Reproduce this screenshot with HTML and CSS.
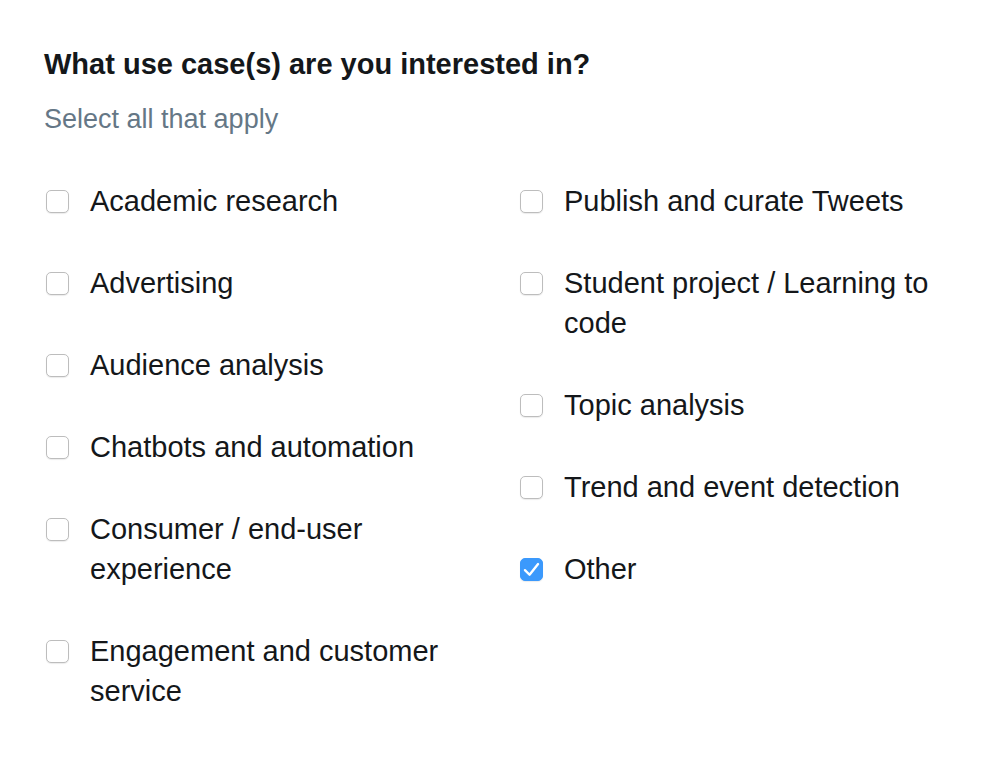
FILE: index.html
```html
<!DOCTYPE html>
<html>
<head>
<meta charset="utf-8">
<link rel="stylesheet" href="styles.css">
</head>
<body>
<div class="form">
  <h2 class="title">What use case(s) are you interested in?</h2>
  <p class="hint">Select all that apply</p>
  <div class="options">
    <div class="col">
      <label class="opt"><span class="box"></span><span class="txt">Academic research</span></label>
      <label class="opt"><span class="box"></span><span class="txt">Advertising</span></label>
      <label class="opt"><span class="box"></span><span class="txt">Audience analysis</span></label>
      <label class="opt"><span class="box"></span><span class="txt">Chatbots and automation</span></label>
      <label class="opt"><span class="box"></span><span class="txt">Consumer / end-user experience</span></label>
      <label class="opt"><span class="box"></span><span class="txt">Engagement and customer service</span></label>
    </div>
    <div class="col">
      <label class="opt"><span class="box"></span><span class="txt">Publish and curate Tweets</span></label>
      <label class="opt"><span class="box"></span><span class="txt">Student project / Learning to code</span></label>
      <label class="opt"><span class="box"></span><span class="txt">Topic analysis</span></label>
      <label class="opt"><span class="box"></span><span class="txt">Trend and event detection</span></label>
      <label class="opt"><span class="box checked"><svg viewBox="0 0 24 24" width="21" height="21"><path d="M4.5 12.8 L9.8 18 L19.5 5.8" fill="none" stroke="#fff" stroke-width="2.7" stroke-linecap="round" stroke-linejoin="round"/></svg></span><span class="txt">Other</span></label>
    </div>
  </div>
</div>
</body>
</html>
```

FILE: styles.css
```css
html, body {
  margin: 0;
  padding: 0;
  background: #ffffff;
}
body {
  font-family: "Liberation Sans", Arial, sans-serif;
  color: #14171a;
}
.form {
  padding: 47px 0 0 44px;
}
.title {
  margin: 0;
  font-size: 29px;
  font-weight: bold;
  line-height: 34px;
  color: #14171a;
}
.hint {
  margin: 22px 0 0 0;
  font-size: 27px;
  line-height: 32px;
  color: #657786;
}
.options {
  display: grid;
  grid-template-columns: 430px 430px;
  column-gap: 44px;
  margin: 46px 0 0 2px;
}
.col {
  display: flex;
  flex-direction: column;
  gap: 42px;
}
.opt {
  display: flex;
  align-items: flex-start;
  gap: 21px;
  font-size: 29px;
  line-height: 40px;
  color: #14171a;
}
.box {
  flex: none;
  box-sizing: border-box;
  width: 23px;
  height: 23px;
  margin-top: 9px;
  border: 1px solid #bdbdbd;
  border-radius: 5px;
  background: #fff;
  box-shadow: 0 1px 1px rgba(0,0,0,0.08);
  display: flex;
  align-items: center;
  justify-content: center;
}
.box.checked {
  background: #3b99fc;
  border-color: #3b99fc;
}
.txt {
  max-width: 386px;
}
```
